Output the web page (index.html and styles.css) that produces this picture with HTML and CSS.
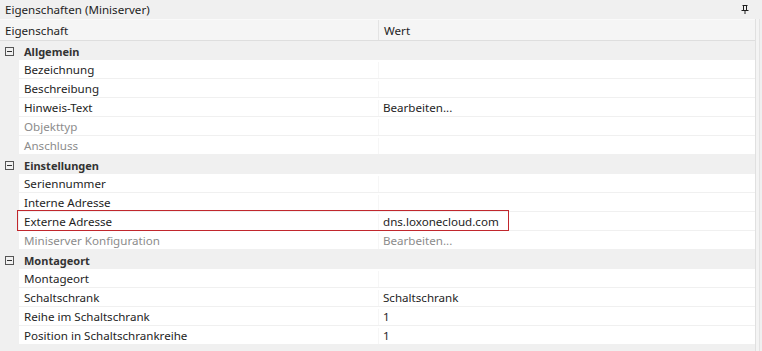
FILE: index.html
```html
<!DOCTYPE html>
<html lang="de">
<head>
    <meta charset="UTF-8">
    <title>Eigenschaften (Miniserver)</title>
    <link rel="stylesheet" href="styles.css">
</head>
<body>
    <div class="panel">
        <div class="titlebar">
            <span>Eigenschaften (Miniserver)</span>
            <svg class="pin" width="8" height="9" viewBox="0 0 8 9">
                <path d="M1.5 0.5h5M2.5 0.5v5M5.5 0.5v5M0.5 5.5h7M4 5.5v3.5" stroke="#1e1e1e" fill="none"/>
            </svg>
        </div>

        <div class="grid">
            <div class="main">
                <div class="head">
                    <div class="col-name">Eigenschaft</div>
                    <div class="col-value">Wert</div>
                </div>

                <!-- Allgemein -->
                <div class="cat"><span class="toggle"></span>Allgemein</div>
                <div class="row"><div class="name">Bezeichnung</div><div class="value"></div></div>
                <div class="row"><div class="name">Beschreibung</div><div class="value"></div></div>
                <div class="row"><div class="name">Hinweis-Text</div><div class="value">Bearbeiten...</div></div>
                <div class="row off"><div class="name">Objekttyp</div><div class="value"></div></div>
                <div class="row off"><div class="name">Anschluss</div><div class="value"></div></div>

                <!-- Einstellungen -->
                <div class="cat"><span class="toggle"></span>Einstellungen</div>
                <div class="row"><div class="name">Seriennummer</div><div class="value"></div></div>
                <div class="row"><div class="name">Interne Adresse</div><div class="value"></div></div>
                <div class="row marked"><div class="name">Externe Adresse</div><div class="value">dns.loxonecloud.com</div></div>
                <div class="row off"><div class="name">Miniserver Konfiguration</div><div class="value">Bearbeiten...</div></div>

                <!-- Montageort -->
                <div class="cat"><span class="toggle"></span>Montageort</div>
                <div class="row"><div class="name">Montageort</div><div class="value"></div></div>
                <div class="row"><div class="name">Schaltschrank</div><div class="value">Schaltschrank</div></div>
                <div class="row"><div class="name">Reihe im Schaltschrank</div><div class="value">1</div></div>
                <div class="row"><div class="name">Position in Schaltschrankreihe</div><div class="value">1</div></div>
            </div>
            <div class="gutter"></div>
        </div>
    </div>
</body>
</html>
```

FILE: styles.css
```css
body {
    margin: 0;
    font-family: "Noto Sans", "Open Sans", sans-serif;
    font-size: 11.6px;
    color: #1e1e1e;
    background-color: #f0f0f0;
}

.panel {
    width: 762px;
    height: 351px;
    overflow: hidden;
}

.titlebar {
    height: 19px;
    display: flex;
    align-items: center;
    justify-content: space-between;
    padding: 0 13px 0 5px;
    background-color: #f0f0f0;
    line-height: 19px;
}

.pin {
    display: block;
}

.grid {
    display: flex;
}

.main {
    width: 755px;
}

.gutter {
    width: 3px;
    border-left: 1px solid #e0e0e0;
    border-right: 1px solid #e3e3e3;
    height: 340px;
    background-color: #f4f4f4;
}

.head {
    display: flex;
    height: 22px;
    line-height: 21px;
    background-color: #f5f5f5;
    border-top: 1px solid #fafafa;
    border-bottom: 1px solid #dedede;
    box-sizing: border-box;
}

.head .col-name {
    width: 373px;
    padding-left: 5px;
    border-right: 1px solid #e3e3e3;
}

.head .col-value {
    padding-left: 5px;
}

.cat {
    display: flex;
    align-items: center;
    height: 19px;
    padding-top: 1px;
    box-sizing: border-box;
    font-size: 11px;
    font-weight: bold;
    color: #333;
    background-color: #f0f0f0;
}

.toggle {
    width: 9px;
    height: 9px;
    margin: 0 10px 0 5px;
    border: 1px solid #555;
    box-sizing: border-box;
    position: relative;
}

.toggle::after {
    content: "";
    position: absolute;
    left: 1px;
    top: 3px;
    width: 5px;
    height: 1px;
    background-color: #333;
}

.row {
    display: flex;
    height: 19px;
    padding-top: 2px;
    line-height: 16px;
    margin-left: 19px;
    background-color: #fff;
    border-bottom: 1px solid #f0f0f0;
    box-sizing: border-box;
    position: relative;
}

.row .name {
    width: 354px;
    padding-left: 5px;
    border-right: 1px solid #f6f6f6;
}

.row .value {
    padding-left: 4px;
}

.row.off {
    color: #8c8c8c;
}

.row.marked::after {
    content: "";
    position: absolute;
    left: -2px;
    top: -2px;
    width: 492px;
    height: 21px;
    border: 1px solid #c1272d;
    box-sizing: border-box;
}
```
